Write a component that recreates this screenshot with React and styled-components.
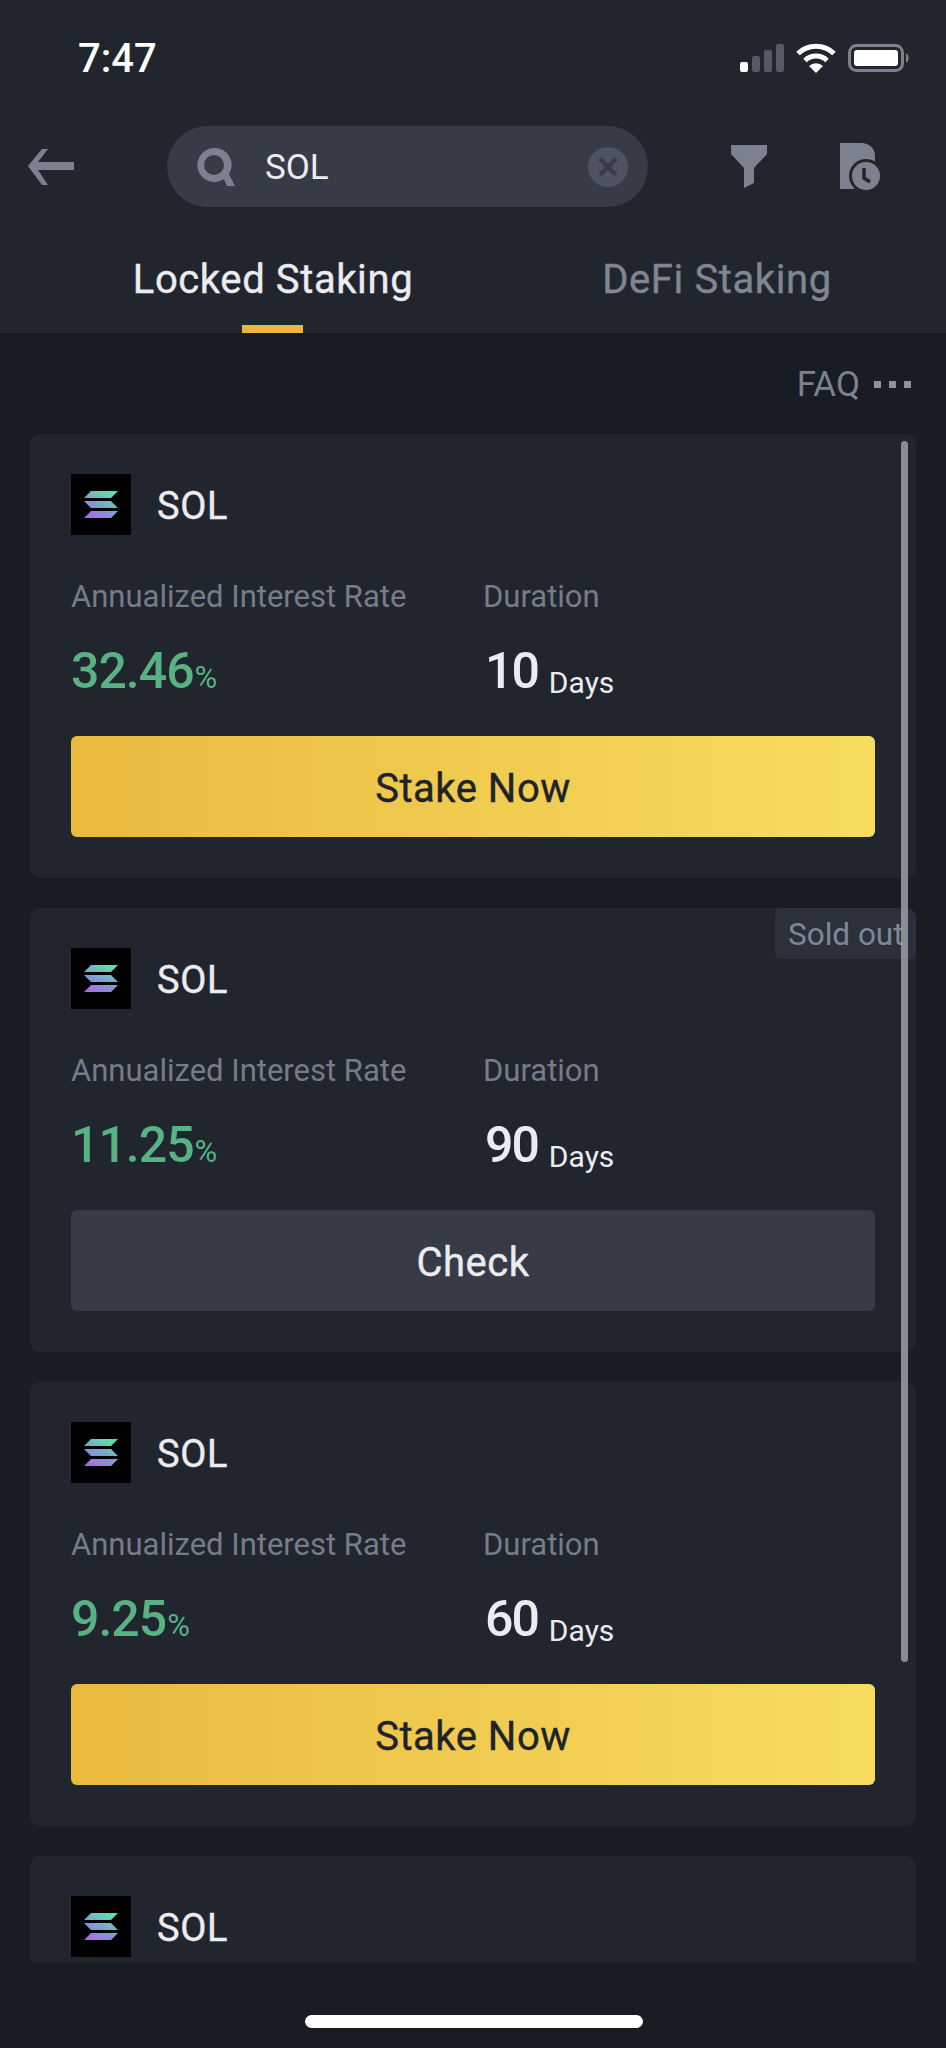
import React from "react";
import styled, { createGlobalStyle } from "styled-components";

const GlobalStyle = createGlobalStyle`
  html, body {
    margin: 0;
    padding: 0;
    background: #181c23;
  }
  * {
    box-sizing: border-box;
  }
`;

const Page = styled.div`
  width: 946px;
  height: 2048px;
  position: relative;
  overflow: hidden;
  background: #181c23;
  font-family: Roboto, "Liberation Sans", sans-serif;
  color: #eaecef;
`;

const Header = styled.header`
  background: #21252e;
  height: 333px;
  display: flex;
  flex-direction: column;
`;

const StatusBar = styled.div`
  height: 126px;
  padding: 43px 36px 0 78px;
  display: flex;
  justify-content: space-between;
  align-items: flex-start;
`;

const Clock = styled.div`
  font-size: 40px;
  line-height: 32px;
  font-weight: 500;
  color: #fff;
`;

const StatusIcons = styled.div`
  display: flex;
  align-items: center;
  gap: 12px;
`;

const NavRow = styled.div`
  display: flex;
  align-items: center;
  height: 81px;
  padding-left: 28px;
`;

const SearchPill = styled.div`
  width: 481px;
  height: 81px;
  margin-left: 93px;
  margin-right: 83px;
  padding: 0 20px 0 30px;
  border-radius: 41px;
  background: #363b47;
  display: flex;
  align-items: center;
`;

const SearchText = styled.span`
  flex: 1;
  margin-left: 30px;
  padding-top: 2px;
  font-size: 35px;
  color: #eaecef;
`;

const DocWrap = styled.div`
  margin-left: 72px;
  display: flex;
`;

const Tabs = styled.div`
  flex: 1;
  display: grid;
  grid-template-columns: 444px 444px;
  padding-left: 51px;
`;

const Tab = styled.div`
  position: relative;
  text-align: center;
  font-size: 40px;
  line-height: 48px;
  padding-top: 49px;
  letter-spacing: 0.6px;
  -webkit-text-stroke: 0.4px currentColor;
  color: ${(p) => (p.$active ? "#eaecef" : "#808693")};
  ${(p) =>
    p.$active &&
    `
    &::after {
      content: "";
      position: absolute;
      left: 191px;
      bottom: 0;
      width: 61px;
      height: 8px;
      background: #e8b93c;
    }
  `}
`;

const Viewport = styled.div`
  height: 1629px;
  overflow: hidden;
  position: relative;
`;

const FaqRow = styled.div`
  height: 101px;
  padding: 30px 35px 0 0;
  display: flex;
  justify-content: flex-end;
  align-items: flex-start;
  gap: 14px;
`;

const FaqLabel = styled.span`
  font-size: 35px;
  line-height: 44px;
  color: #7b818f;
`;

const Dots = styled.div`
  display: flex;
  gap: 8px;
  padding-top: 18px;
`;

const Dot = styled.i`
  width: 7px;
  height: 7px;
  background: #8d929e;
`;

const CardList = styled.div`
  margin: 0 30px;
  display: flex;
  flex-direction: column;
  gap: 30px;
`;

const Card = styled.section`
  position: relative;
  height: 444px;
  flex-shrink: 0;
  padding: 40px 41px;
  background: #21252d;
  border-radius: 10px;
  overflow: hidden;
`;

const CoinRow = styled.div`
  display: flex;
  align-items: center;
  gap: 26px;
`;

const CoinLogo = styled.div`
  width: 60px;
  height: 61px;
  background: #000;
  display: flex;
  align-items: center;
  justify-content: center;
`;

const CoinName = styled.div`
  font-size: 38px;
  padding-top: 2px;
  letter-spacing: 0.6px;
  -webkit-text-stroke: 0.4px currentColor;
  color: #eaecef;
`;

const Stats = styled.div`
  display: grid;
  grid-template-columns: 412px 1fr;
  margin-top: 44px;
`;

const StatLabel = styled.div`
  font-size: 31px;
  line-height: 36px;
  color: #767c89;
`;

const StatValue = styled.div`
  margin-top: 26px;
  height: 60px;
  display: flex;
  align-items: baseline;
  line-height: 60px;
`;

const Big = styled.span`
  font-size: 50px;
  font-weight: 500;
  letter-spacing: ${(p) => (p.$green ? "-1px" : "-2px")};
  margin-left: ${(p) => (p.$green ? "0" : "2px")};
  color: ${(p) => (p.$green ? "#58b283" : "#eaecef")};
`;

const Unit = styled.span`
  font-size: ${(p) => (p.$small ? "31px" : "30px")};
  margin-left: ${(p) => (p.$small ? "1px" : "11px")};
  color: ${(p) => (p.$small ? "#58b283" : "#eaecef")};
  position: relative;
  top: ${(p) => (p.$small ? "0" : "5px")};
`;

const ActionButton = styled.div`
  margin-top: 35px;
  height: 101px;
  padding-top: 3px;
  border-radius: 6px;
  display: flex;
  align-items: center;
  justify-content: center;
  font-size: 40px;
  letter-spacing: 0.5px;
  -webkit-text-stroke: 0.4px currentColor;
  color: ${(p) => (p.$primary ? "#1e2329" : "#eaecef")};
  background: ${(p) =>
    p.$primary ? "linear-gradient(90deg, #e8ba3e 0%, #f7dc60 100%)" : "#363b47"};
`;

const SoldOut = styled.div`
  position: absolute;
  top: 0;
  right: 0;
  width: 141px;
  height: 51px;
  border-radius: 6px;
  padding-left: 13px;
  background: #2b303b;
  font-size: 31.5px;
  line-height: 54px;
  color: #7f8797;
  white-space: nowrap;
  overflow: hidden;
`;

const ScrollThumb = styled.div`
  position: absolute;
  left: 901px;
  top: 441px;
  width: 7px;
  height: 1221px;
  border-radius: 4px;
  background: rgba(160, 163, 172, 0.82);
`;

const HomeBar = styled.div`
  position: absolute;
  left: 305px;
  top: 2015px;
  width: 338px;
  height: 13px;
  border-radius: 7px;
  background: #fff;
`;

const Signal = () => (
  <svg width="44" height="28" viewBox="0 0 44 28">
    <rect x="0" y="18" width="8" height="10" rx="2" fill="#fff" />
    <rect x="12" y="12" width="8" height="16" rx="2" fill="#555a65" />
    <rect x="24" y="6" width="8" height="22" rx="2" fill="#555a65" />
    <rect x="36" y="0" width="8" height="28" rx="2" fill="#555a65" />
  </svg>
);

const Wifi = () => (
  <svg width="40" height="30" viewBox="0 0 40 30" fill="none" stroke="#fff" strokeWidth="5">
    <path d="M2 10.5 A26 26 0 0 1 38 10.5" />
    <path d="M9 17.5 A16 16 0 0 1 31 17.5" />
    <path d="M20 30 L13 23 A10 10 0 0 1 27 23 Z" fill="#fff" stroke="none" />
  </svg>
);

const Battery = () => (
  <svg width="62" height="28" viewBox="0 0 62 28">
    <rect x="1.5" y="1.5" width="53" height="25" rx="7" fill="none" stroke="#7b818f" strokeWidth="3" />
    <rect x="6" y="6" width="44" height="16" rx="3" fill="#fff" />
    <path d="M58 9 A6 6 0 0 1 58 19 Z" fill="#7b818f" />
  </svg>
);

const BackArrow = () => (
  <svg width="46" height="36" viewBox="0 0 46 36">
    <path d="M0 17 L14 0 H20 L10 13 H46 V21 H10 L20 36 H14 Z" fill="#7b818f" />
  </svg>
);

const SearchIcon = () => (
  <svg width="38" height="38" viewBox="0 0 38 38">
    <path
      d="M17 0 A17 17 0 1 0 27 31 L30 38 H38 L32 26 A17 17 0 0 0 17 0 Z M17 7 A10 10 0 1 1 17 27 A10 10 0 1 1 17 7 Z"
      fill="#7b818f"
      fillRule="evenodd"
    />
  </svg>
);

const ClearIcon = () => (
  <svg width="40" height="40" viewBox="0 0 40 40">
    <circle cx="20" cy="20" r="20" fill="#4d5361" />
    <path d="M12 12 L28 28 M28 12 L12 28" stroke="#363b47" strokeWidth="4" />
  </svg>
);

const FilterIcon = () => (
  <svg width="37" height="43" viewBox="0 0 37 43">
    <path d="M0 0 H36 V9 L23 23 V38 L13 43 V23 L0 9 Z" fill="#7b818f" />
  </svg>
);

const RecordIcon = () => (
  <svg width="42" height="48" viewBox="0 0 42 48">
    <path d="M0 0 H23 Q35 2 35 14 V22 L14 46 H0 Z" fill="#7b818f" />
    <circle cx="26" cy="33" r="17" fill="#21252e" />
    <circle cx="26" cy="33" r="14" fill="#7b818f" />
    <path d="M24 25 V35 L30 39" fill="none" stroke="#21252e" strokeWidth="3.5" />
  </svg>
);

const SolLogo = ({ id }) => (
  <svg width="34" height="27" viewBox="0 0 34 27">
    <defs>
      <linearGradient id={id} x1="0" y1="1" x2="0.6" y2="0">
        <stop offset="0" stopColor="#b55fe8" />
        <stop offset="0.5" stopColor="#7f9bd2" />
        <stop offset="1" stopColor="#60dcab" />
      </linearGradient>
    </defs>
    <path
      d="M7 0 H34 L27 7 H0 Z M0 10 H27 L34 17 H7 Z M7 20 H34 L27 27 H0 Z"
      fill={`url(#${id})`}
    />
  </svg>
);

const products = [
  { rate: "32.46", days: "10", action: "Stake Now", primary: true },
  { rate: "11.25", days: "90", action: "Check", soldOut: true },
  { rate: "9.25", days: "60", action: "Stake Now", primary: true },
  { headerOnly: true },
];

const App = () => {
  return (
    <Page>
      <GlobalStyle />
      <Header>
        <StatusBar>
          <Clock>7:47</Clock>
          <StatusIcons>
            <Signal />
            <Wifi />
            <Battery />
          </StatusIcons>
        </StatusBar>
        <NavRow>
          <BackArrow />
          <SearchPill>
            <SearchIcon />
            <SearchText>SOL</SearchText>
            <ClearIcon />
          </SearchPill>
          <FilterIcon />
          <DocWrap>
            <RecordIcon />
          </DocWrap>
        </NavRow>
        <Tabs>
          <Tab $active>Locked Staking</Tab>
          <Tab>DeFi Staking</Tab>
        </Tabs>
      </Header>
      <Viewport>
        <FaqRow>
          <FaqLabel>FAQ</FaqLabel>
          <Dots>
            <Dot />
            <Dot />
            <Dot />
          </Dots>
        </FaqRow>
        <CardList>
          {products.map((item, i) => (
            <Card key={i}>
              {item.soldOut && <SoldOut>Sold out</SoldOut>}
              <CoinRow>
                <CoinLogo>
                  <SolLogo id={`sol-${i}`} />
                </CoinLogo>
                <CoinName>SOL</CoinName>
              </CoinRow>
              {!item.headerOnly && (
                <>
                  <Stats>
                    <div>
                      <StatLabel>Annualized Interest Rate</StatLabel>
                      <StatValue>
                        <Big $green>{item.rate}</Big>
                        <Unit $small>%</Unit>
                      </StatValue>
                    </div>
                    <div>
                      <StatLabel>Duration</StatLabel>
                      <StatValue>
                        <Big>{item.days}</Big>
                        <Unit>Days</Unit>
                      </StatValue>
                    </div>
                  </Stats>
                  <ActionButton $primary={item.primary}>{item.action}</ActionButton>
                </>
              )}
            </Card>
          ))}
        </CardList>
      </Viewport>
      <ScrollThumb />
      <HomeBar />
    </Page>
  );
};

export default App;
